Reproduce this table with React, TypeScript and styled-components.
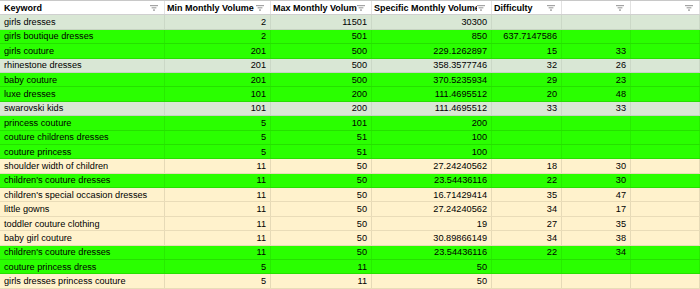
import * as React from "react";
import styled, { createGlobalStyle } from "styled-components";

type Tone = "grey" | "green" | "cream";

interface RowData {
  keyword: string;
  min: string;
  max: string;
  specific: string;
  difficulty?: string;
  extra?: string;
  tone: Tone;
}

const COLUMNS = "165px 106px 101px 120px 70px 69px 69px";

const tones: Record<Tone, { bg: string; line: string; col: string }> = {
  grey: { bg: "#d9e7d5", line: "#c6d3c2", col: "#cbd8c7" },
  green: { bg: "#2aff00", line: "#25e000", col: "#27ec00" },
  cream: { bg: "#fff2cc", line: "#e9dcb8", col: "#e6dab7" },
};

const headers = [
  "Keyword",
  "Min Monthly Volume",
  "Max Monthly Volume",
  "Specific Monthly Volume",
  "Difficulty",
  "",
  "",
];

const rows: RowData[] = [
  { keyword: "girls dresses", min: "2", max: "11501", specific: "30300", tone: "grey" },
  { keyword: "girls boutique dresses", min: "2", max: "501", specific: "850", difficulty: "637.7147586", tone: "green" },
  { keyword: "girls couture", min: "201", max: "500", specific: "229.1262897", difficulty: "15", extra: "33", tone: "green" },
  { keyword: "rhinestone dresses", min: "201", max: "500", specific: "358.3577746", difficulty: "32", extra: "26", tone: "grey" },
  { keyword: "baby couture", min: "201", max: "500", specific: "370.5235934", difficulty: "29", extra: "23", tone: "green" },
  { keyword: "luxe dresses", min: "101", max: "200", specific: "111.4695512", difficulty: "20", extra: "48", tone: "green" },
  { keyword: "swarovski kids", min: "101", max: "200", specific: "111.4695512", difficulty: "33", extra: "33", tone: "grey" },
  { keyword: "princess couture", min: "5", max: "101", specific: "200", tone: "green" },
  { keyword: "couture childrens dresses", min: "5", max: "51", specific: "100", tone: "green" },
  { keyword: "couture princess", min: "5", max: "51", specific: "100", tone: "green" },
  { keyword: "shoulder width of children", min: "11", max: "50", specific: "27.24240562", difficulty: "18", extra: "30", tone: "cream" },
  { keyword: "children's couture dresses", min: "11", max: "50", specific: "23.54436116", difficulty: "22", extra: "30", tone: "green" },
  { keyword: "children's special occasion dresses", min: "11", max: "50", specific: "16.71429414", difficulty: "35", extra: "47", tone: "cream" },
  { keyword: "little gowns", min: "11", max: "50", specific: "27.24240562", difficulty: "34", extra: "17", tone: "cream" },
  { keyword: "toddler couture clothing", min: "11", max: "50", specific: "19", difficulty: "27", extra: "35", tone: "cream" },
  { keyword: "baby girl couture", min: "11", max: "50", specific: "30.89866149", difficulty: "34", extra: "38", tone: "cream" },
  { keyword: "children's couture dresses", min: "11", max: "50", specific: "23.54436116", difficulty: "22", extra: "34", tone: "green" },
  { keyword: "couture princess dress", min: "5", max: "11", specific: "50", tone: "green" },
  { keyword: "girls dresses princess couture", min: "5", max: "11", specific: "50", tone: "cream" },
];

const FilterIcon = () => (
  <svg width="8" height="6" viewBox="0 0 8 6">
    <rect x="0" y="0" width="8" height="1.2" fill="#a3a3a3" />
    <rect x="1.6" y="2.2" width="4.8" height="1.2" fill="#a3a3a3" />
    <rect x="3" y="4.4" width="2" height="1.4" fill="#a3a3a3" />
  </svg>
);

export default function App() {
  return (
    <>
      <GlobalStyle />
      <Sheet>
        <HeaderRow>
          {headers.map((h, i) => (
            <HeaderCell key={i} $first={i === 0}>
              <HeaderLabel>{h}</HeaderLabel>
              <FilterIcon />
            </HeaderCell>
          ))}
        </HeaderRow>
        {rows.map((r, i) => (
          <Row key={i} $tone={r.tone}>
            <Cell $tone={r.tone}>{r.keyword}</Cell>
            <Cell $tone={r.tone} $num>{r.min}</Cell>
            <Cell $tone={r.tone} $num>{r.max}</Cell>
            <Cell $tone={r.tone} $num>{r.specific}</Cell>
            <Cell $tone={r.tone} $num>{r.difficulty ?? ""}</Cell>
            <Cell $tone={r.tone} $num>{r.extra ?? ""}</Cell>
            <Cell $tone={r.tone} $num />
          </Row>
        ))}
      </Sheet>
    </>
  );
}

const GlobalStyle = createGlobalStyle`
  html, body {
    margin: 0;
    padding: 0;
    background: #ffffff;
  }
  body {
    font-family: "Liberation Sans", Arial, sans-serif;
    color: #000000;
  }
`;

const Sheet = styled.div`
  width: 700px;
  height: 289px;
  overflow: hidden;
  border-top: 1px solid #c8c8c8;
  box-sizing: border-box;
`;

const HeaderRow = styled.div`
  display: grid;
  grid-template-columns: ${COLUMNS};
  height: 13.4px;
  background: #ffffff;
  border-bottom: 1px solid #d0d0d0;
`;

const HeaderCell = styled.div<{ $first?: boolean }>`
  display: flex;
  align-items: center;
  padding: 0 6px 0 ${({ $first }) => ($first ? "4px" : "2px")};
  border-right: 1px solid #e2e2e2;
  overflow: hidden;
  font-size: 9px;
  font-weight: bold;

  svg {
    flex: none;
  }
`;

const HeaderLabel = styled.span`
  flex: 1;
  white-space: nowrap;
  overflow: hidden;
`;

const Row = styled.div<{ $tone: Tone }>`
  display: grid;
  grid-template-columns: ${COLUMNS};
  height: 14.4px;
  box-sizing: border-box;
  background: ${({ $tone }) => tones[$tone].bg};
  border-bottom: 1px solid ${({ $tone }) => tones[$tone].line};
`;

const Cell = styled.div<{ $tone: Tone; $num?: boolean }>`
  display: flex;
  align-items: center;
  justify-content: ${({ $num }) => ($num ? "flex-end" : "flex-start")};
  padding: 0 4px;
  font-size: 9.2px;
  white-space: nowrap;
  overflow: hidden;
  border-right: 1px solid ${({ $tone }) => tones[$tone].col};
`;
